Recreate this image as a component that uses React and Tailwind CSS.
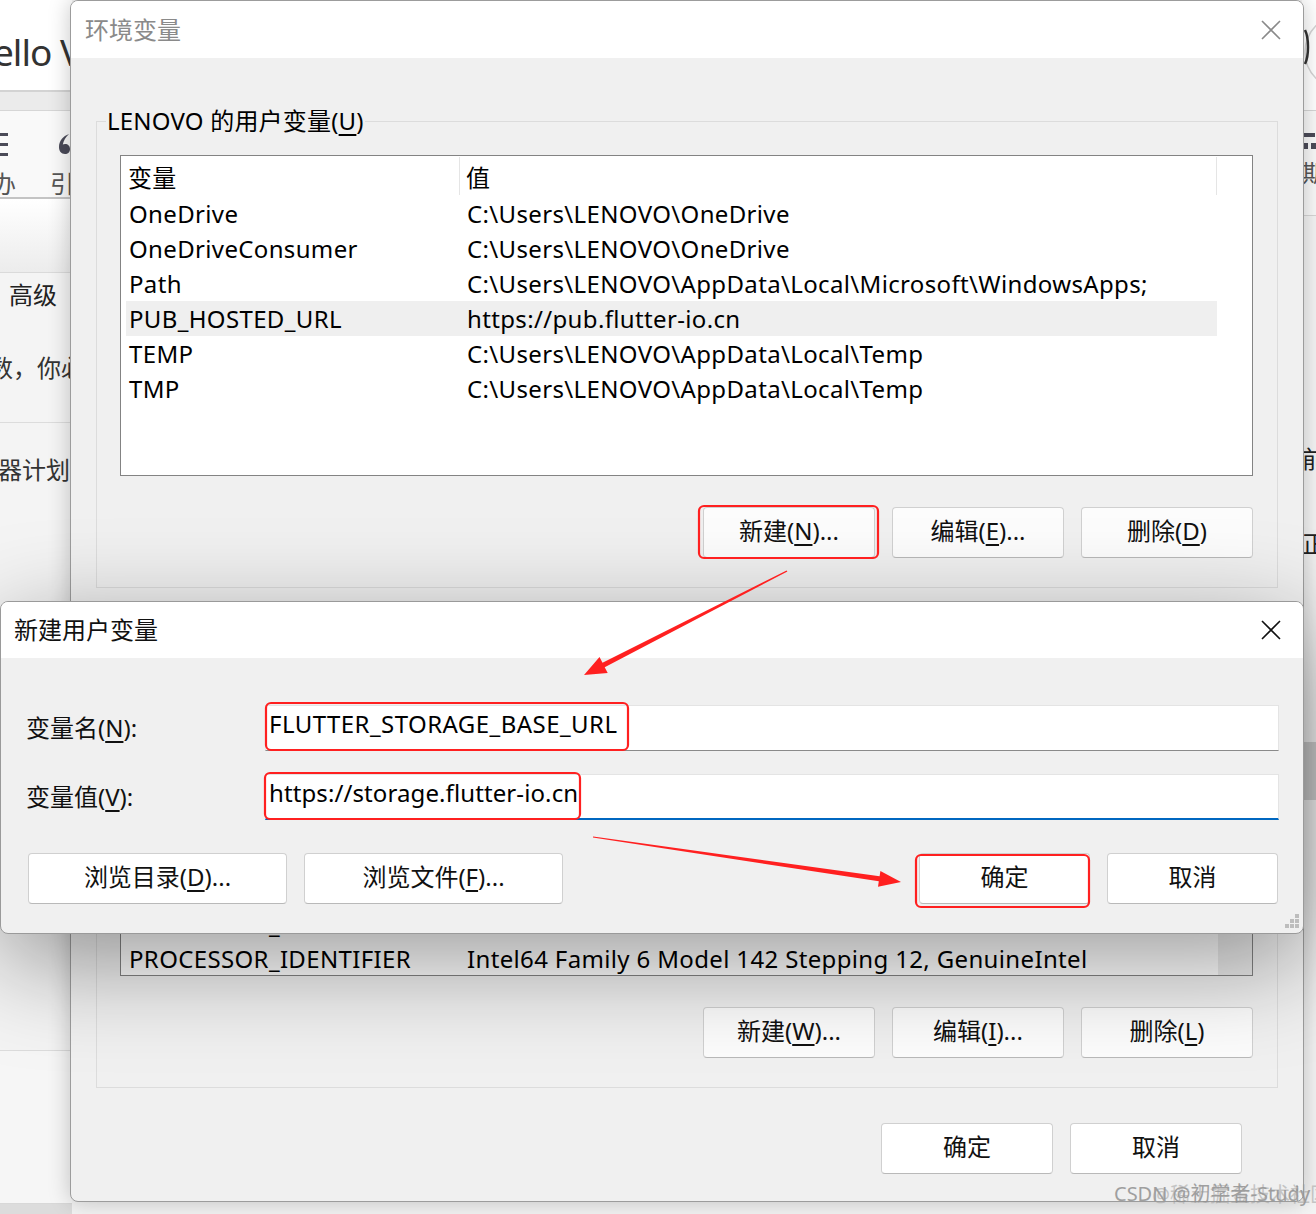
import React from "react";

const U = ({ c }) => (
  <span className="underline decoration-[1.5px] underline-offset-[4px]">{c}</span>
);

function Btn({ children, className = "w-[172px]" }) {
  return (
    <div
      className={
        "flex h-[51px] shrink-0 items-center justify-center rounded-[4px] border border-[#d0d0d0] border-b-[#b9b9b9] bg-[#fcfcfc] pb-[3px] text-[24px] leading-none text-[#111] " +
        className
      }
    >
      {children}
    </div>
  );
}

function XIcon({ color }) {
  return (
    <svg width="20" height="20" viewBox="0 0 20 20">
      <path d="M1 1L19 19M19 1L1 19" stroke={color} strokeWidth="1.6" />
    </svg>
  );
}

const userVars = [
  ["OneDrive", "C:\\Users\\LENOVO\\OneDrive"],
  ["OneDriveConsumer", "C:\\Users\\LENOVO\\OneDrive"],
  ["Path", "C:\\Users\\LENOVO\\AppData\\Local\\Microsoft\\WindowsApps;"],
  ["PUB_HOSTED_URL", "https://pub.flutter-io.cn", true],
  ["TEMP", "C:\\Users\\LENOVO\\AppData\\Local\\Temp"],
  ["TMP", "C:\\Users\\LENOVO\\AppData\\Local\\Temp"],
];

const sysVars = [
  ["ComSpec", "C:\\Windows\\system32\\cmd.exe"],
  ["DriverData", "C:\\Windows\\System32\\Drivers\\DriverData"],
  ["NUMBER_OF_PROCESSORS", "8"],
  ["OS", "Windows_NT"],
  ["Path", "C:\\Windows\\system32;C:\\Windows;C:\\Windows\\System32\\Wbem;"],
  ["PATHEXT", ".COM;.EXE;.BAT;.CMD;.VBS;.VBE;.JS;.JSE;.WSF;.WSH;.MSC"],
  ["PROCESSOR_ARCHITECTURE", "AMD64"],
  ["PROCESSOR_IDENTIFIER", "Intel64 Family 6 Model 142 Stepping 12, GenuineIntel"],
];

function VarList({ rows, scroll }) {
  return (
    <div className="flex h-[321px] border border-[#838383] bg-white text-[24px] tracking-[0.35px] text-black">
      <div className="flex-1 overflow-hidden">
        <div className="flex h-[40px]">
          <div className="my-[1px] flex w-[339px] items-center border-r border-[#e5e5e5] pl-[7px] pt-[3px]">
            变量
          </div>
          <div className="my-[1px] flex w-[757px] items-center border-r border-[#e5e5e5] pl-[6px] pt-[3px]">
            值
          </div>
        </div>
        {rows.map(([n, v, hl]) => (
          <div
            key={n + v}
            className={
              "ml-[5px] flex h-[35px] w-[1091px] items-center whitespace-nowrap leading-[35px] " +
              (hl ? "bg-[#efefef]" : "")
            }
          >
            <div className="w-[341px] shrink-0 pl-[3px]">{n}</div>
            <div>{v}</div>
          </div>
        ))}
      </div>
      {scroll && <div className="w-[34px] shrink-0 bg-[#ececec]" />}
    </div>
  );
}

function Group({ legend, rows, scroll, buttons, className = "" }) {
  return (
    <fieldset className={"border border-[#dcdcdc] " + className}>
      <legend className="ml-[9px] px-[1px] text-[24px] leading-[34px] tracking-[0.2px] text-black">{legend}</legend>
      <div className="pl-[23px] pr-[24px] pt-[17px] pb-[29px]">
        <VarList rows={rows} scroll={scroll} />
        <div className="mt-[31px] flex justify-end gap-[17px]">{buttons}</div>
      </div>
    </fieldset>
  );
}

function LeftBackground() {
  return (
    <div className="flex w-[72px] shrink-0 flex-col overflow-hidden text-[#333]">
      <div className="h-[92px] shrink-0 whitespace-nowrap border-b-2 border-[#d3d3d3] bg-white pt-[32px] text-[37px] leading-[40px] tracking-[-1px] -ml-[7px]">
        ello V
      </div>
      <div className="h-[19px] shrink-0 border-b border-[#d6d6d6] bg-[#ebebeb]" />
      <div className="flex h-[88px] shrink-0 flex-col border-b-2 border-[#c4c4c4] bg-[#f9f9f9]">
        <div className="mt-[21px] flex h-[27px] items-start justify-between">
          <div className="flex flex-col gap-[7px] pt-[1px]">
            <div className="h-[3px] w-[8px] bg-[#4b4b58]" />
            <div className="h-[3px] w-[8px] bg-[#4b4b58]" />
            <div className="h-[3px] w-[8px] bg-[#4b4b58]" />
          </div>
          <svg width="14" height="24" viewBox="0 0 14 24">
            <path
              d="M11 2 C5 4 1 9 1 15 C1 19 3 22 7 22 C10 22 12 20 12 17 C12 14 10 12 7 12 C6 12 5.4 12.2 4.8 12.5 C5.6 8.5 7.5 5.5 11 2Z"
              fill="#4a4a58"
            />
          </svg>
        </div>
        <div className="mt-[13px] flex justify-between whitespace-nowrap text-[24px] leading-[24px] text-[#555]">
          <span className="-ml-[8px]">办</span>
          <span className="mr-[-2px]">引</span>
        </div>
      </div>
      <div className="h-[74px] shrink-0 border-b border-[#dadada] bg-gradient-to-b from-white to-[#ececec]" />
      <div className="flex h-[150px] shrink-0 flex-col border-b border-[#dcdcdc] bg-[#f4f4f4] whitespace-nowrap text-[24px] leading-[24px]">
        <span className="ml-[9px] mt-[10px] text-[#222]">高级</span>
        <span className="-ml-[11px] mt-[49px]">数，你必</span>
      </div>
      <div className="flex h-[628px] shrink-0 flex-col border-b border-[#dcdcdc] bg-[#f4f4f4] whitespace-nowrap text-[24px] leading-[24px]">
        <span className="-ml-[2px] mt-[35px]">器计划</span>
      </div>
      <div className="h-[153px] shrink-0 border-b border-[#d8d8d8] bg-[#f6f6f6]" />
      <div className="flex-1 bg-[#dcdcdc]" />
    </div>
  );
}

function RightBackground() {
  return (
    <div className="flex w-[14px] shrink-0 flex-col overflow-hidden text-[#333]">
      <div className="h-[111px] shrink-0 border-b border-[#d6d6d6] bg-white">
        <svg width="14" height="110" viewBox="0 0 14 110">
          <circle cx="40" cy="52" r="37" fill="none" stroke="#d4d4d4" strokeWidth="1.5" />
          <path d="M3 30 C7 38 7 56 3 64" fill="none" stroke="#333" strokeWidth="2.5" />
        </svg>
      </div>
      <div className="flex h-[105px] shrink-0 flex-col border-b border-[#d6d6d6] bg-[#f9f9f9]">
        <div className="mt-[22px] flex flex-col gap-[6px] pl-[1px]">
          <div className="h-[4px] w-[12px] bg-[#4b4b58]" />
          <div className="flex gap-[3px]">
            <div className="h-[6px] w-[5px] bg-[#4b4b58]" />
            <div className="h-[6px] w-[5px] bg-[#4b4b58]" />
          </div>
        </div>
        <span className="mt-[12px] text-[24px] leading-[24px] text-[#555]">期</span>
      </div>
      <div className="flex flex-1 flex-col bg-[#f4f4f4] text-[24px] leading-[24px]">
        <span className="mt-[231px] text-[#222]">前</span>
        <span className="mt-[61px] text-[#222]">正</span>
        <div className="ml-[2px] mt-[186px] h-[58px] w-[12px] bg-[#cfcfcf]" />
      </div>
    </div>
  );
}

export default function App() {
  return (
    <div className="relative h-[1214px] w-[1316px] overflow-hidden bg-[#f3f3f3] font-['Noto_Sans','Noto_Sans_CJK_SC',sans-serif]">
      {/* background app */}
      <div className="absolute inset-0 flex justify-between">
        <LeftBackground />
        <RightBackground />
      </div>

      {/* main window: 环境变量 */}
      <div className="absolute left-[70px] top-0 z-10 flex h-[1202px] w-[1234px] flex-col overflow-hidden rounded-[8px] border border-[#9c9c9c] bg-[#f0f0f0] shadow-[0_0_22px_rgba(0,0,0,0.22)]">
        <div className="flex h-[57px] shrink-0 items-center justify-between bg-white pl-[14px] pr-[22px]">
          <span className="text-[24px] text-[#8a8a8a]">环境变量</span>
          <XIcon color="#8a8a8a" />
        </div>
        <div className="flex flex-col px-[25px] pt-[46px]">
          <Group
            legend={
              <>
                LENOVO 的用户变量(<U c="U" />)
              </>
            }
            rows={userVars}
            buttons={
              <>
                <Btn>
                  新建(<U c="N" />)...
                </Btn>
                <Btn>
                  编辑(<U c="E" />)...
                </Btn>
                <Btn>
                  删除(<U c="D" />)
                </Btn>
              </>
            }
          />
          <Group
            className="mt-[16px]"
            legend={
              <>
                系统变量(<U c="S" />)
              </>
            }
            rows={sysVars}
            scroll
            buttons={
              <>
                <Btn>
                  新建(<U c="W" />)...
                </Btn>
                <Btn>
                  编辑(<U c="I" />)...
                </Btn>
                <Btn>
                  删除(<U c="L" />)
                </Btn>
              </>
            }
          />
          <div className="mt-[35px] flex justify-end gap-[17px] pr-[36px]">
            <Btn className="w-[172px] bg-white">确定</Btn>
            <Btn className="w-[172px] bg-white">取消</Btn>
          </div>
        </div>
        <svg width="12" height="12" viewBox="0 0 12 12" className="absolute bottom-[4px] right-[4px]">
          <rect x="9" y="0" width="2" height="2" fill="#c4c4c4" />
          <rect x="5" y="4" width="2" height="2" fill="#c4c4c4" />
          <rect x="9" y="4" width="2" height="2" fill="#c4c4c4" />
        </svg>
      </div>

      {/* dialog: 新建用户变量 */}
      <div className="absolute left-0 top-[601px] z-20 flex h-[333px] w-[1304px] flex-col overflow-hidden rounded-[8px] border border-[#9a9a9a] bg-[#f0f0f0] text-[24px] text-black shadow-[0_28px_100px_rgba(0,0,0,0.4)]">
        <div className="flex h-[56px] shrink-0 items-center justify-between bg-white pl-[13px] pr-[22px]">
          <span className="text-[24px] text-[#111]">新建用户变量</span>
          <XIcon color="#111" />
        </div>
        <div className="flex flex-1 flex-col pt-[47px] pb-[29px]">
          <div className="flex h-[46px] items-center pr-[24px]">
            <div className="w-[264px] shrink-0 pl-[25px] text-[#111]">
              变量名(<U c="N" />):
            </div>
            <div className="flex h-full flex-1 items-center border border-[#e4e4e4] border-b-[#8a8a8a] bg-white pb-[8px] pl-[3px] whitespace-nowrap tracking-[0.45px]">
              FLUTTER_STORAGE_BASE_URL
            </div>
          </div>
          <div className="mt-[23px] flex h-[46px] items-center pr-[24px]">
            <div className="w-[264px] shrink-0 pl-[25px] text-[#111]">
              变量值(<U c="V" />):
            </div>
            <div className="flex h-full flex-1 items-center border border-[#e4e4e4] border-b-2 border-b-[#0067c0] bg-white pb-[7px] pl-[3px] whitespace-nowrap tracking-[0.1px]">
              https://storage.flutter-io.cn
            </div>
          </div>
          <div className="mt-[33px] flex justify-between pl-[27px] pr-[25px]">
            <div className="flex gap-[17px]">
              <Btn className="w-[259px] bg-white">
                浏览目录(<U c="D" />)...
              </Btn>
              <Btn className="w-[259px] bg-white">
                浏览文件(<U c="F" />)...
              </Btn>
            </div>
            <div className="flex gap-[17px]">
              <Btn className="w-[171px] bg-white">确定</Btn>
              <Btn className="w-[171px] bg-white">取消</Btn>
            </div>
          </div>
        </div>
        <svg width="16" height="16" viewBox="0 0 16 16" className="absolute bottom-[4px] right-[3px]">
          <rect x="11" y="1" width="4" height="4" fill="#bdbdbd" />
          <rect x="6" y="6" width="4" height="4" fill="#bdbdbd" />
          <rect x="11" y="6" width="4" height="4" fill="#bdbdbd" />
          <rect x="1" y="11" width="4" height="4" fill="#bdbdbd" />
          <rect x="6" y="11" width="4" height="4" fill="#bdbdbd" />
          <rect x="11" y="11" width="4" height="4" fill="#bdbdbd" />
        </svg>
      </div>

      {/* annotations */}
      <svg
        className="pointer-events-none absolute inset-0 z-30"
        width="1316"
        height="1214"
        viewBox="0 0 1316 1214"
      >
        <g fill="none" stroke="#ff2020" strokeWidth="2.2">
          <rect x="699" y="506" width="179" height="52" rx="5" />
          <rect x="266" y="703" width="362" height="47" rx="5" />
          <rect x="265" y="773" width="315" height="46" rx="5" />
          <rect x="916" y="855" width="173" height="52" rx="5" />
        </g>
        <g fill="#ff2020">
          <polygon points="787.4,571.5 604.7,667.2 607.7,673.0 584,675 599.5,657.0 602.5,662.8 786.6,570.5" />
          <polygon points="592.9,837.6 878.8,881.3 878.0,886.7 901,882 880.4,870.9 879.6,876.3 593.1,836.4" />
        </g>
      </svg>

      {/* watermark */}
      <div className="absolute left-[1114px] top-[1181px] z-40 whitespace-nowrap text-[20px] leading-[26px] text-[#8c8c8c] opacity-80">
        CSDN @初学者-Study
      </div>
      <div className="absolute left-[1152px] top-[1182px] z-40 whitespace-nowrap text-[20px] leading-[26px] text-[#9a9a9a] opacity-50">
        @稀土掘金技术社区
      </div>
    </div>
  );
}
